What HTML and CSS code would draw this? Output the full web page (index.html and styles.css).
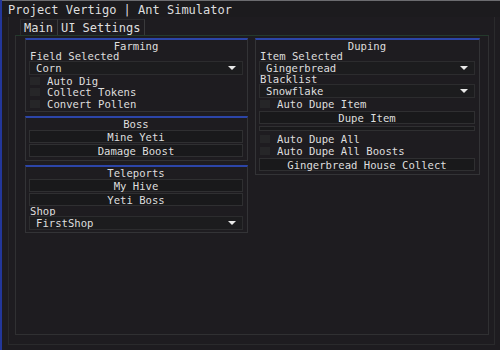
FILE: index.html
```html
<!DOCTYPE html>
<html lang="en">
  <head>
    <meta charset="UTF-8" />
    <title>Project Vertigo | Ant Simulator</title>
    <link rel="stylesheet" href="styles.css">
  </head>
  <body>
    <div class="app">
      <!-- Title bar -->
      <div class="titlebar">Project Vertigo | Ant Simulator</div>

      <div class="window">
        <!-- Tabs -->
        <div class="tabs">
          <div class="tab active">Main</div>
          <div class="tab">UI Settings</div>
        </div>

        <div class="tabpanel">
          <!-- Left column -->
          <div class="column">
            <div class="panel farming">
              <div class="header">Farming</div>
              <div class="label">Field Selected</div>
              <div class="combo">Corn<span class="arrow"></span></div>
              <div class="check"><span class="box"></span>Auto Dig</div>
              <div class="check"><span class="box"></span>Collect Tokens</div>
              <div class="check"><span class="box"></span>Convert Pollen</div>
            </div>

            <div class="panel boss">
              <div class="header">Boss</div>
              <div class="button">Mine Yeti</div>
              <div class="button">Damage Boost</div>
            </div>

            <div class="panel teleports">
              <div class="header">Teleports</div>
              <div class="button">My Hive</div>
              <div class="button">Yeti Boss</div>
              <div class="label">Shop</div>
              <div class="combo">FirstShop<span class="arrow"></span></div>
            </div>
          </div>

          <!-- Right column -->
          <div class="column right">
            <div class="panel duping">
              <div class="header">Duping</div>
              <div class="label">Item Selected</div>
              <div class="combo">Gingerbread<span class="arrow"></span></div>
              <div class="label short">Blacklist</div>
              <div class="combo">Snowflake<span class="arrow"></span></div>
              <div class="check"><span class="box"></span>Auto Dupe Item</div>
              <div class="button">Dupe Item</div>
              <div class="bar"></div>
              <div class="check"><span class="box"></span>Auto Dupe All</div>
              <div class="check"><span class="box"></span>Auto Dupe All Boosts</div>
              <div class="button">Gingerbread House Collect</div>
            </div>
          </div>
        </div>
      </div>
    </div>
  </body>
</html>
```

FILE: styles.css
```css
/* General */
body {
  margin: 0;
  background-color: #1e1c20;
  color: #dedede;
  font-family: "DejaVu Sans Mono", monospace;
}

.app {
  width: 498px;
  height: 350px;
  border-left: 2px solid #23379a;
  overflow: hidden;
}

/* Title bar */
.titlebar {
  height: 16px;
  line-height: 18px;
  padding-left: 6px;
  font-size: 12px;
  border-top: 1px solid #6c6c70;
  background-color: #1c1b1e;
}

/* Window frame */
.window {
  margin: 0 5px 0 6px;
  height: 325px;
  border: 1px solid #2a2a2c;
  border-top: none;
  padding: 2px 5px 0 6px;
}

.tabs {
  display: flex;
  height: 16px;
  padding-left: 5px;
}

.tab {
  font-size: 12px;
  line-height: 16px;
  padding: 0 4px 0 3px;
  border-right: 1px solid #3a3a3c;
  border-top: 1px solid #2c2c2e;
}

.tab.active {
  border-left: 1px solid #2c2c2e;
}

.tabpanel {
  display: flex;
  gap: 7px;
  height: 296px;
  padding: 2px 0 0 9px;
  border: 1px solid #303032;
  border-top: 1px solid #243a2c;
}

/* Columns and panels */
.column {
  width: 223px;
  display: flex;
  flex-direction: column;
  gap: 4px;
}

.column.right {
  width: 225px;
}

.panel {
  border: 1px solid #333336;
  border-top: 2px solid #2c45a8;
  padding: 0 4px 2px 3px;
  font-size: 10.6px;
}

.header {
  height: 11px;
  line-height: 12px;
  text-align: center;
}

.label {
  height: 10px;
  line-height: 10px;
  padding-left: 1px;
}

.label.short {
  height: 9px;
  line-height: 8px;
}

.combo {
  position: relative;
  height: 12px;
  line-height: 12px;
  padding-left: 6px;
  background-color: #1c1c1e;
  border: 1px solid #2c2c2e;
}

.arrow {
  position: absolute;
  right: 6px;
  top: 4px;
  border-top: 4px solid #e8e8e8;
  border-left: 4px solid transparent;
  border-right: 4px solid transparent;
}

.check {
  display: flex;
  align-items: center;
  height: 11.5px;
}

.box {
  width: 10px;
  height: 8px;
  margin: 0 7px 0 1px;
  background-color: #262628;
}

.button {
  height: 11px;
  line-height: 12px;
  margin-top: 1px;
  text-align: center;
  background-color: #19191b;
  border: 1px solid #2f2f31;
}

.bar {
  height: 3px;
  margin: 2px 0 3px;
  background-color: #19191b;
  border: 1px solid #2f2f31;
}

.farming {
  height: 69px;
}

.boss {
  height: 40px;
}

.teleports {
  height: 63px;
}

.duping {
  padding-bottom: 3px;
}
```
